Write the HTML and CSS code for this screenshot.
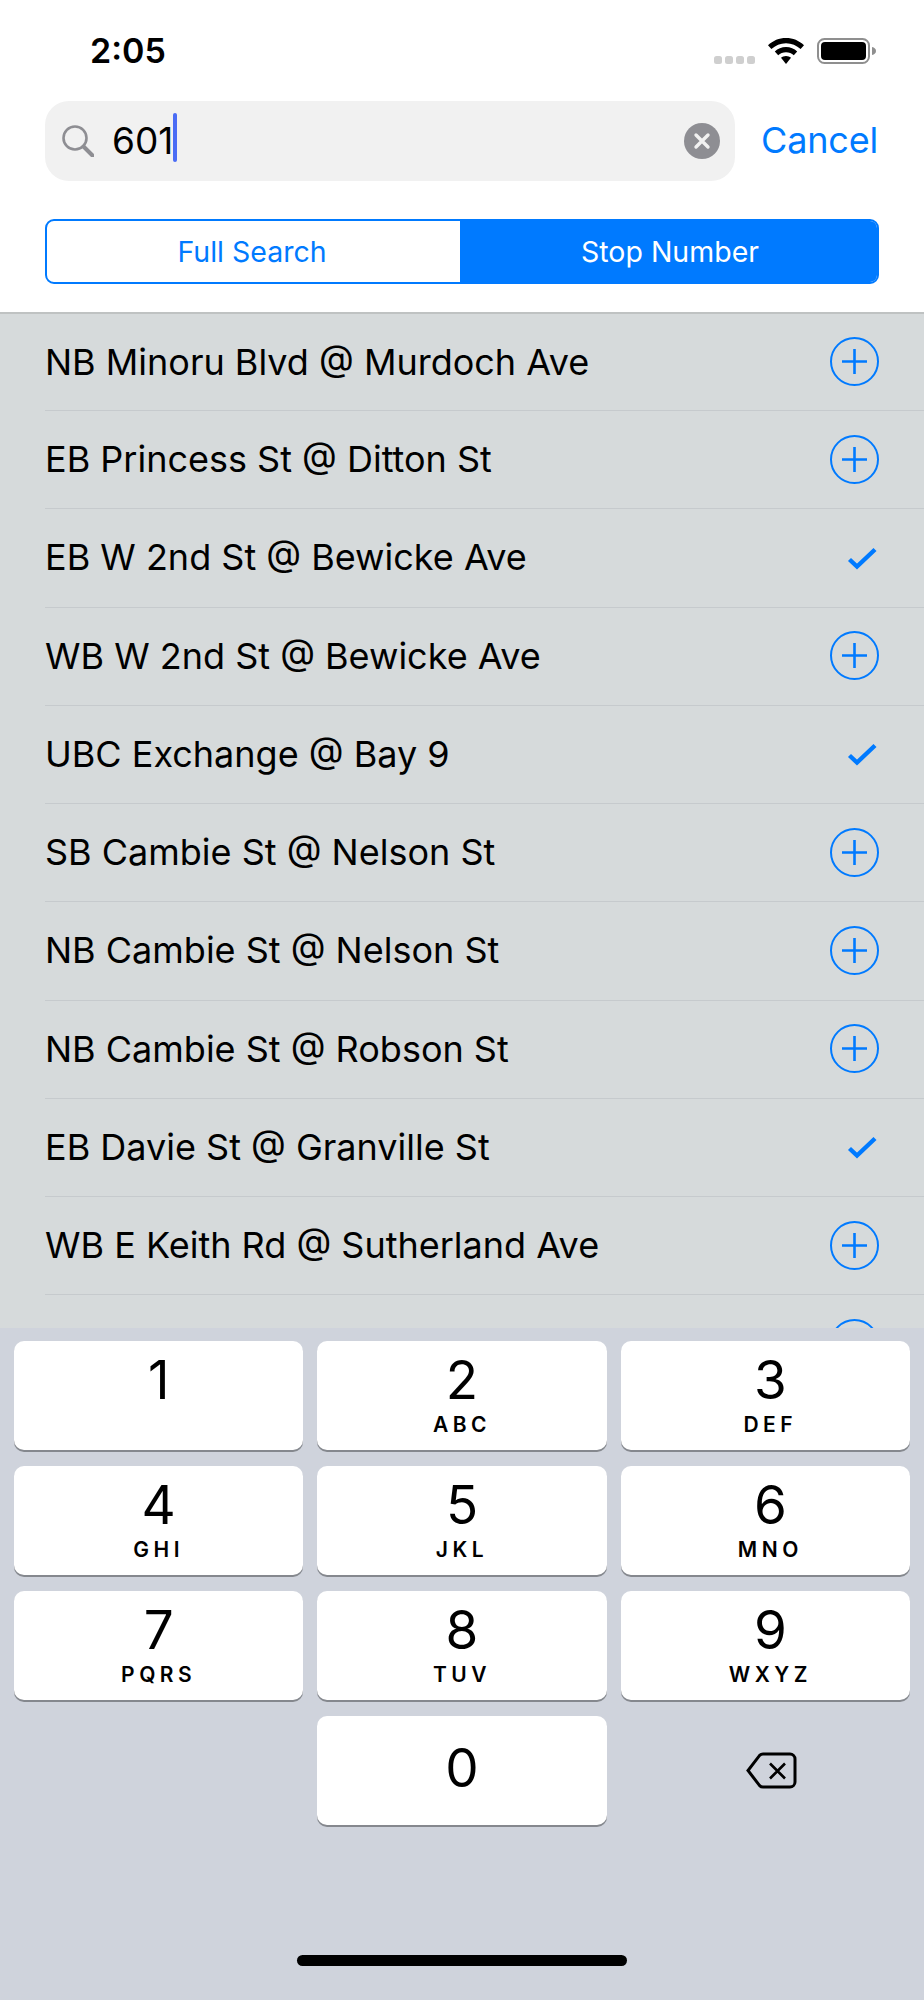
FILE: index.html
```html
<!DOCTYPE html>
<html lang="en">
<head>
  <meta charset="UTF-8">
  <meta name="viewport" content="width=device-width, initial-scale=1.0">
  <title>Stop search</title>
  <link rel="stylesheet" href="styles.css">
</head>
<body>
  <svg class="icon-defs" width="0" height="0">
    <symbol id="icon-add" viewBox="0 0 49 49">
      <circle cx="24.5" cy="24.5" r="23.5" fill="none" stroke="#007aff" stroke-width="2"/>
      <path d="M12 24.5H37M24.5 12V37" fill="none" stroke="#007aff" stroke-width="2.6"/>
    </symbol>
    <symbol id="icon-check" viewBox="0 0 49 49">
      <path d="M19.5 26.5L27 33.5L45 16.5" fill="none" stroke="#007aff" stroke-width="4.4"/>
    </symbol>
  </svg>

  <div class="phone">
    <header class="top">
      <div class="status-bar">
        <span class="time">2:05</span>
        <div class="status-icons">
          <svg class="signal" width="41" height="26" viewBox="0 0 41 26">
            <rect x="0" y="18" width="8" height="8" rx="2.5" fill="#cfcfcf"/>
            <rect x="11" y="18" width="8" height="8" rx="2.5" fill="#cfcfcf"/>
            <rect x="22" y="18" width="8" height="8" rx="2.5" fill="#cfcfcf"/>
            <rect x="33" y="18" width="8" height="8" rx="2.5" fill="#cfcfcf"/>
          </svg>
          <svg class="wifi" width="36" height="26" viewBox="0 0 36 26">
            <path d="M18 0C11 0 5 2.6 0 7.2L3.4 11C7.4 7.4 12.4 5.2 18 5.2S28.6 7.4 32.6 11L36 7.2C31 2.6 25 0 18 0Z"/>
            <path d="M18 9C13.6 9 9.8 10.6 6.8 13.4L10.2 17.2C12.3 15.3 15 14.2 18 14.2S23.7 15.3 25.8 17.2L29.2 13.4C26.2 10.6 22.4 9 18 9Z"/>
            <path d="M18 18C16 18 14.4 18.7 13 19.8L18 26L23 19.8C21.6 18.7 20 18 18 18Z"/>
          </svg>
          <svg class="battery" width="59" height="26" viewBox="0 0 59 26">
            <rect x="1" y="1" width="51" height="24" rx="6.5" fill="#fff" stroke="#8f8f8f" stroke-width="2"/>
            <rect x="4" y="4" width="45" height="18" rx="4" fill="#000"/>
            <path d="M55 9C57.5 9.6 59 11 59 13S57.5 16.4 55 17Z" fill="#8f8f8f"/>
          </svg>
        </div>
      </div>

      <div class="search-row">
        <div class="search-box">
          <svg class="search-icon" width="32" height="32" viewBox="0 0 32 32">
            <circle cx="13" cy="13" r="11.5" fill="none" stroke="#8e8e93" stroke-width="2.6"/>
            <path d="M21.5 21.5L30.5 30.5" fill="none" stroke="#8e8e93" stroke-width="4" stroke-linecap="round"/>
          </svg>
          <span class="search-text">601</span>
          <span class="caret"></span>
          <svg class="clear-icon" width="36" height="36" viewBox="0 0 36 36">
            <circle cx="18" cy="18" r="18" fill="#8e8e93"/>
            <path d="M12 12L24 24M24 12L12 24" fill="none" stroke="#f1f1f1" stroke-width="3.4" stroke-linecap="round"/>
          </svg>
        </div>
        <span class="cancel">Cancel</span>
      </div>

      <div class="segments">
        <div class="segment">Full Search</div>
        <div class="segment active">Stop Number</div>
      </div>
    </header>

    <main class="list">
      <div class="row"><span class="stop-name">NB Minoru Blvd @ Murdoch Ave</span><svg class="row-icon"><use href="#icon-add"/></svg></div>
      <div class="row"><span class="stop-name">EB Princess St @ Ditton St</span><svg class="row-icon"><use href="#icon-add"/></svg></div>
      <div class="row"><span class="stop-name">EB W 2nd St @ Bewicke Ave</span><svg class="row-icon"><use href="#icon-check"/></svg></div>
      <div class="row"><span class="stop-name">WB W 2nd St @ Bewicke Ave</span><svg class="row-icon"><use href="#icon-add"/></svg></div>
      <div class="row"><span class="stop-name">UBC Exchange @ Bay 9</span><svg class="row-icon"><use href="#icon-check"/></svg></div>
      <div class="row"><span class="stop-name">SB Cambie St @ Nelson St</span><svg class="row-icon"><use href="#icon-add"/></svg></div>
      <div class="row"><span class="stop-name">NB Cambie St @ Nelson St</span><svg class="row-icon"><use href="#icon-add"/></svg></div>
      <div class="row"><span class="stop-name">NB Cambie St @ Robson St</span><svg class="row-icon"><use href="#icon-add"/></svg></div>
      <div class="row"><span class="stop-name">EB Davie St @ Granville St</span><svg class="row-icon"><use href="#icon-check"/></svg></div>
      <div class="row"><span class="stop-name">WB E Keith Rd @ Sutherland Ave</span><svg class="row-icon"><use href="#icon-add"/></svg></div>
      <div class="row"><span class="stop-name"></span><svg class="row-icon"><use href="#icon-add"/></svg></div>
    </main>

    <div class="keyboard">
      <div class="keys">
        <div class="key"><span class="digit">1</span></div>
        <div class="key"><span class="digit">2</span><span class="letters">ABC</span></div>
        <div class="key key-right"><span class="digit">3</span><span class="letters">DEF</span></div>
        <div class="key"><span class="digit">4</span><span class="letters">GHI</span></div>
        <div class="key"><span class="digit">5</span><span class="letters">JKL</span></div>
        <div class="key key-right"><span class="digit">6</span><span class="letters">MNO</span></div>
        <div class="key"><span class="digit">7</span><span class="letters">PQRS</span></div>
        <div class="key"><span class="digit">8</span><span class="letters">TUV</span></div>
        <div class="key key-right"><span class="digit">9</span><span class="letters">WXYZ</span></div>
        <div class="key-blank"></div>
        <div class="key key-zero"><span class="digit">0</span></div>
        <div class="key-blank key-delete">
          <svg width="51" height="37" viewBox="0 0 51 37">
            <path d="M17 2H44A5 5 0 0 1 49 7V30A5 5 0 0 1 44 35H17Q15 35 13.6 33.6L2 18.5L13.6 3.4Q15 2 17 2Z" fill="none" stroke="#000" stroke-width="3"/>
            <path d="M24 11.5L39 26.5M39 11.5L24 26.5" fill="none" stroke="#000" stroke-width="2.6"/>
          </svg>
        </div>
      </div>
      <div class="home-bar"></div>
    </div>
  </div>
</body>
</html>
```

FILE: styles.css
```css
* {
  box-sizing: border-box;
}

body {
  margin: 0;
  padding: 0;
  background-color: #ffffff;
  font-family: Inter, "Liberation Sans", sans-serif;
  color: #000000;
}

.icon-defs {
  position: absolute;
}

.phone {
  display: flex;
  flex-direction: column;
  height: 2000px;
  overflow: hidden;
}

.top {
  flex: none;
  height: 314px;
  background-color: #ffffff;
  border-bottom: 2px solid #bfc2c2;
}

.status-bar {
  display: flex;
  justify-content: space-between;
  align-items: center;
  height: 101px;
  padding: 0 48px 0 90px;
}

.time {
  font-size: 34px;
  font-weight: 600;
}

.status-icons {
  display: flex;
  align-items: center;
  gap: 13px;
}

.search-row {
  display: flex;
  align-items: center;
  gap: 26px;
  padding: 0 45px;
}

.search-box {
  flex: 1;
  display: flex;
  align-items: center;
  height: 80px;
  padding: 0 12px 0 17px;
  background-color: #f1f1f1;
  border-radius: 24px;
}

.search-icon {
  flex: none;
}

.search-text {
  margin: 0 0 2px 18px;
  font-size: 37px;
}

.caret {
  width: 4px;
  height: 49px;
  margin-left: 0;
  margin-top: -8px;
  background-color: #4a6cf5;
  border-radius: 2px;
}

.clear-icon {
  margin-left: auto;
  margin-right: 3px;
}

.cancel {
  flex: none;
  width: 118px;
  margin-bottom: 2px;
  font-size: 36px;
  letter-spacing: -0.15px;
  color: #007aff;
}

.segments {
  display: grid;
  grid-template-columns: 413px 1fr;
  height: 65px;
  margin: 38px 45px 0;
  border: 2px solid #007aff;
  border-radius: 9px;
  overflow: hidden;
}

.segment {
  display: flex;
  justify-content: center;
  align-items: center;
  padding-right: 3px;
  font-size: 28.5px;
  color: #007aff;
}

.segment.active {
  padding: 0 0 0 3px;
  background-color: #007aff;
  color: #ffffff;
}

.list {
  flex: 1;
  min-height: 0;
  padding-left: 45px;
  background-color: #d6dadb;
  overflow: hidden;
}

.row {
  display: flex;
  justify-content: space-between;
  align-items: center;
  height: 98.25px;
  padding: 0 45px 1px 0;
  border-bottom: 1px solid #c6cacd;
}

.row:first-child {
  height: 97px;
}

.stop-name {
  font-size: 36px;
}

.row-icon {
  flex: none;
  width: 49px;
  height: 49px;
}

.keyboard {
  flex: none;
  height: 672px;
  padding: 13px 14px 0;
  background-color: #cfd3dc;
}

.keys {
  display: grid;
  grid-template-columns: repeat(3, 1fr);
  grid-auto-rows: 109px;
  column-gap: 14px;
  row-gap: 16px;
}

.key {
  display: flex;
  flex-direction: column;
  align-items: center;
  padding-top: 13px;
  background-color: #ffffff;
  border-radius: 10px;
  box-shadow: 0 2px 0 #85888e;
}

.key-right {
  padding-left: 10px;
}

.key-zero {
  justify-content: center;
  padding: 0 0 5px;
}

.key-blank {
  display: flex;
  justify-content: center;
  align-items: center;
}

.key-delete {
  padding-left: 12px;
}

.digit {
  font-size: 53px;
  line-height: 53px;
}

.letters {
  margin-top: 8px;
  font-size: 21px;
  line-height: 20px;
  font-weight: 600;
  letter-spacing: 4.5px;
}

.home-bar {
  width: 330px;
  height: 11px;
  margin: 130px auto 0;
  background-color: #000000;
  border-radius: 6px;
}
```
